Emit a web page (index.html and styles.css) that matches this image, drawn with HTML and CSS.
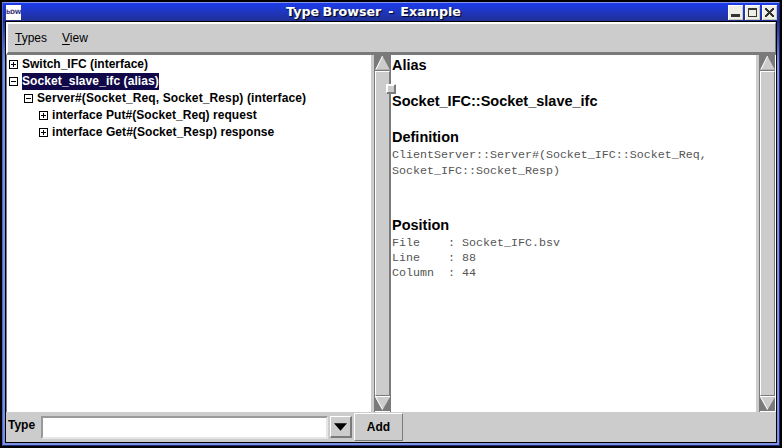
FILE: index.html
```html
<!DOCTYPE html>
<html lang="en">
<head>
<meta charset="utf-8">
<title>Type Browser - Example</title>
<link rel="stylesheet" href="styles.css">
</head>
<body>
<div class="window">
  <header class="titlebar">
    <span class="app-icon">bDW</span>
    <h1>Type Browser&nbsp; -&nbsp; Example</h1>
    <div class="controls">
      <svg class="control" viewBox="0 0 15 15"><path d="M3 9h9v3H3z"/></svg>
      <svg class="control" viewBox="0 0 15 15"><path fill-rule="evenodd" d="M3 3h9v9H3zM4 5v6h7V5z"/></svg>
      <svg class="control" viewBox="0 0 15 15"><path d="M3 3h2v1h1v1h1v1h1V5h1V4h1V3h2v2h-1v1h-1v1H9v1h1v1h1v1h1v2h-2v-1H9v-1H8V9H7v1H6v1H5v1H3v-2h1V9h1V8h1V7H5V6H4V5H3z"/></svg>
    </div>
  </header>
  <main class="content">
    <nav class="menubar"><span><u>T</u>ypes</span><span><u>V</u>iew</span></nav>
    <div class="panes">
      <ul class="tree">
        <li><svg class="toggle" viewBox="0 0 9 9"><path d="M.5 .5h8v8h-8zM2 4.5h5M4.5 2v5"/></svg><span>Switch_IFC (interface)</span></li>
        <li><svg class="toggle" viewBox="0 0 9 9"><path d="M.5 .5h8v8h-8zM2 4.5h5"/></svg><span class="selected">Socket_slave_ifc (alias)</span></li>
        <li class="level-1"><svg class="toggle" viewBox="0 0 9 9"><path d="M.5 .5h8v8h-8zM2 4.5h5"/></svg><span>Server#(Socket_Req, Socket_Resp) (interface)</span></li>
        <li class="level-2"><svg class="toggle" viewBox="0 0 9 9"><path d="M.5 .5h8v8h-8zM2 4.5h5M4.5 2v5"/></svg><span>interface Put#(Socket_Req) request</span></li>
        <li class="level-2"><svg class="toggle" viewBox="0 0 9 9"><path d="M.5 .5h8v8h-8zM2 4.5h5M4.5 2v5"/></svg><span>interface Get#(Socket_Resp) response</span></li>
      </ul>
      <div class="scrollbar">
        <svg class="arrow" viewBox="0 0 15 16"><path class="face" d="M7.5 1L15 15H0z"/><path class="light" d="M7.5 1L.7 15"/><path class="dark" d="M0 15.2h15"/></svg>
        <div class="thumb"></div>
        <svg class="arrow" viewBox="0 0 15 16"><path class="face" d="M0 1h15L7.5 14z"/><path class="light" d="M0 .5h15M.7 1l6.8 12.5"/><path class="light" d="M0 15.5h15"/></svg>
        <div class="sash"></div>
      </div>
      <section class="details">
        <h2>Alias</h2>
        <h2 class="name">Socket_IFC::Socket_slave_ifc</h2>
        <h2>Definition</h2>
        <pre class="definition">ClientServer::Server#(Socket_IFC::Socket_Req,
Socket_IFC::Socket_Resp)</pre>
        <h2>Position</h2>
        <pre class="position">File    : Socket_IFC.bsv
Line    : 88
Column  : 44</pre>
      </section>
      <div class="scrollbar last">
        <svg class="arrow" viewBox="0 0 15 16"><path class="face" d="M7.5 1L15 15H0z"/><path class="light" d="M7.5 1L.7 15"/><path class="dark" d="M0 15.2h15"/></svg>
        <div class="thumb"></div>
        <svg class="arrow" viewBox="0 0 15 16"><path class="face" d="M0 1h15L7.5 14z"/><path class="light" d="M0 .5h15M.7 1l6.8 12.5"/><path class="light" d="M0 15.5h15"/></svg>
      </div>
    </div>
    <footer class="entry-bar">
      <label for="type">Type</label>
      <input id="type" class="field">
      <button class="drop" aria-label="Choose type"><svg viewBox="0 0 14 8"><path d="M0 0h14L7 8z"/></svg></button>
      <button class="add">Add</button>
    </footer>
  </main>
</div>
</body>
</html>
```
FILE: styles.css
```css
* { box-sizing: border-box; }
body {
  margin: 0;
  width: 782px;
  height: 448px;
  padding: 2px;
  background: #000;
  overflow: hidden;
  color: #000;
  font-family: "Liberation Sans", sans-serif;
}
.window {
  height: 444px;
  border: 1px solid;
  border-color: #8494e8 #1c2878 #202c80 #5065c8;
  padding: 0 2px 2px;
  background: linear-gradient(#1e3edc, #1c2f90 18px, #7c90e0 60px);
}
.titlebar {
  display: flex;
  align-items: center;
  justify-content: space-between;
  height: 18px;
  margin: 0 -2px;
  padding: 1px 2px 0 3px;
  background: linear-gradient(#1c3cea, #203094);
}
.app-icon {
  width: 15px;
  height: 15px;
  background: #fff;
  color: #35357c;
  font: bold 6px/13px "DejaVu Sans", sans-serif;
  letter-spacing: -.3px;
  text-align: center;
}
h1 {
  margin: 0 0 0 -2px;
  color: #fff;
  font: bold 12.7px/17px "DejaVu Sans", sans-serif;
  word-spacing: -1px;
  text-shadow: 1px 1px 1px #001;
  white-space: nowrap;
  position: relative;
  top: -1px;
}
.controls { display: flex; gap: 2px; }
.control {
  width: 15px;
  height: 15px;
  background: #eeeee6;
  box-shadow: inset 1px 1px #fff, inset -1px -1px #c8c8bc;
  fill: #333;
  shape-rendering: crispEdges;
}
.content {
  height: 422px;
  border: 1px solid #000;
  background: #ccc;
}
.menubar {
  display: flex;
  gap: 15px;
  height: 33px;
  border: solid;
  border-width: 2px 1px 3px 2px;
  border-color: #fff #7a7a7a #7a7a7a #fff;
  padding: 6px 7px;
  font-size: 12px;
  line-height: 16px;
}
u { text-underline-offset: 2px; text-decoration-thickness: 1px; }
.panes { display: flex; height: 357px; background: #fff; }
.tree {
  width: 365px;
  margin: 0;
  padding: 1px 0 0 2px;
  border-left: 1px solid #7a7a7a;
  list-style: none;
  font-size: 12px;
  font-weight: bold;
}
.tree li { display: flex; align-items: center; gap: 4px; height: 17px; white-space: nowrap; }
.tree span { line-height: 17px; }
.tree .level-1 { padding-left: 15px; letter-spacing: .115px; }
.tree .level-2 { padding-left: 30px; letter-spacing: .06px; }
.tree .selected { background: #100848; color: #fff; letter-spacing: .09px; }
.toggle { width: 9px; height: 9px; fill: none; stroke: #000; shape-rendering: crispEdges; }
.scrollbar {
  position: relative;
  display: flex;
  flex-direction: column;
  width: 20px;
  border: solid #ccc;
  border-width: 0 0 0 3px;
  padding: 0 1px;
  background: #7a7a7a;
}
.last { border-right: 1px solid #fff; padding-right: 0; }
.arrow { width: 15px; height: 16px; }
.face { fill: #ccc; }
.light { fill: none; stroke: #fff; }
.dark { fill: none; stroke: #7a7a7a; }
.thumb {
  flex: 1;
  width: 15px;
  background: #ccc;
  border: 1px solid;
  border-color: #fff #7a7a7a #7a7a7a #fff;
}
.sash {
  position: absolute;
  left: 12px;
  top: 29px;
  width: 10px;
  height: 10px;
  border: 1px solid;
  border-color: #fff #7a7a7a #7a7a7a #fff;
  box-shadow: inset -1px -1px #7a7a7a, inset 1px 1px #fff;
  background: #ccc;
}
.details { width: 365px; padding: 1px 0 0 1px; }
h2 { margin: 0; font-size: 14.5px; line-height: 18px; }
.name { margin: 18px 0; }
pre {
  margin: 0;
  color: #555;
  font: 11.667px/15px "Liberation Mono", monospace;
}
.definition { margin: 1px 0 37px; line-height: 16px; }
.position { margin-top: 2px; }
.entry-bar { display: flex; height: 30px; padding-left: 2px; font-size: 12px; font-weight: bold; }
.entry-bar label { width: 33px; line-height: 26px; }
.field {
  width: 287px;
  height: 23px;
  margin-top: 4px;
  border: 2px solid;
  border-color: #999 #e6e6e6 #e6e6e6 #999;
  background: #fff;
  padding: 0;
  outline: 0;
}
.entry-bar button {
  display: grid;
  place-items: center;
  padding: 0;
  border: 1px solid;
  border-color: #fff #7a7a7a #7a7a7a #fff;
  background: #ccc;
  color: #000;
  font: bold 12px "Liberation Sans", sans-serif;
}
.entry-bar .drop { width: 22px; height: 22px; margin: 4px 2px 0; border-right-width: 2px; border-bottom-width: 2px; }
.drop svg { width: 13px; height: 8px; }
.entry-bar .add { width: 49px; height: 28px; margin-top: 1px; }
```
